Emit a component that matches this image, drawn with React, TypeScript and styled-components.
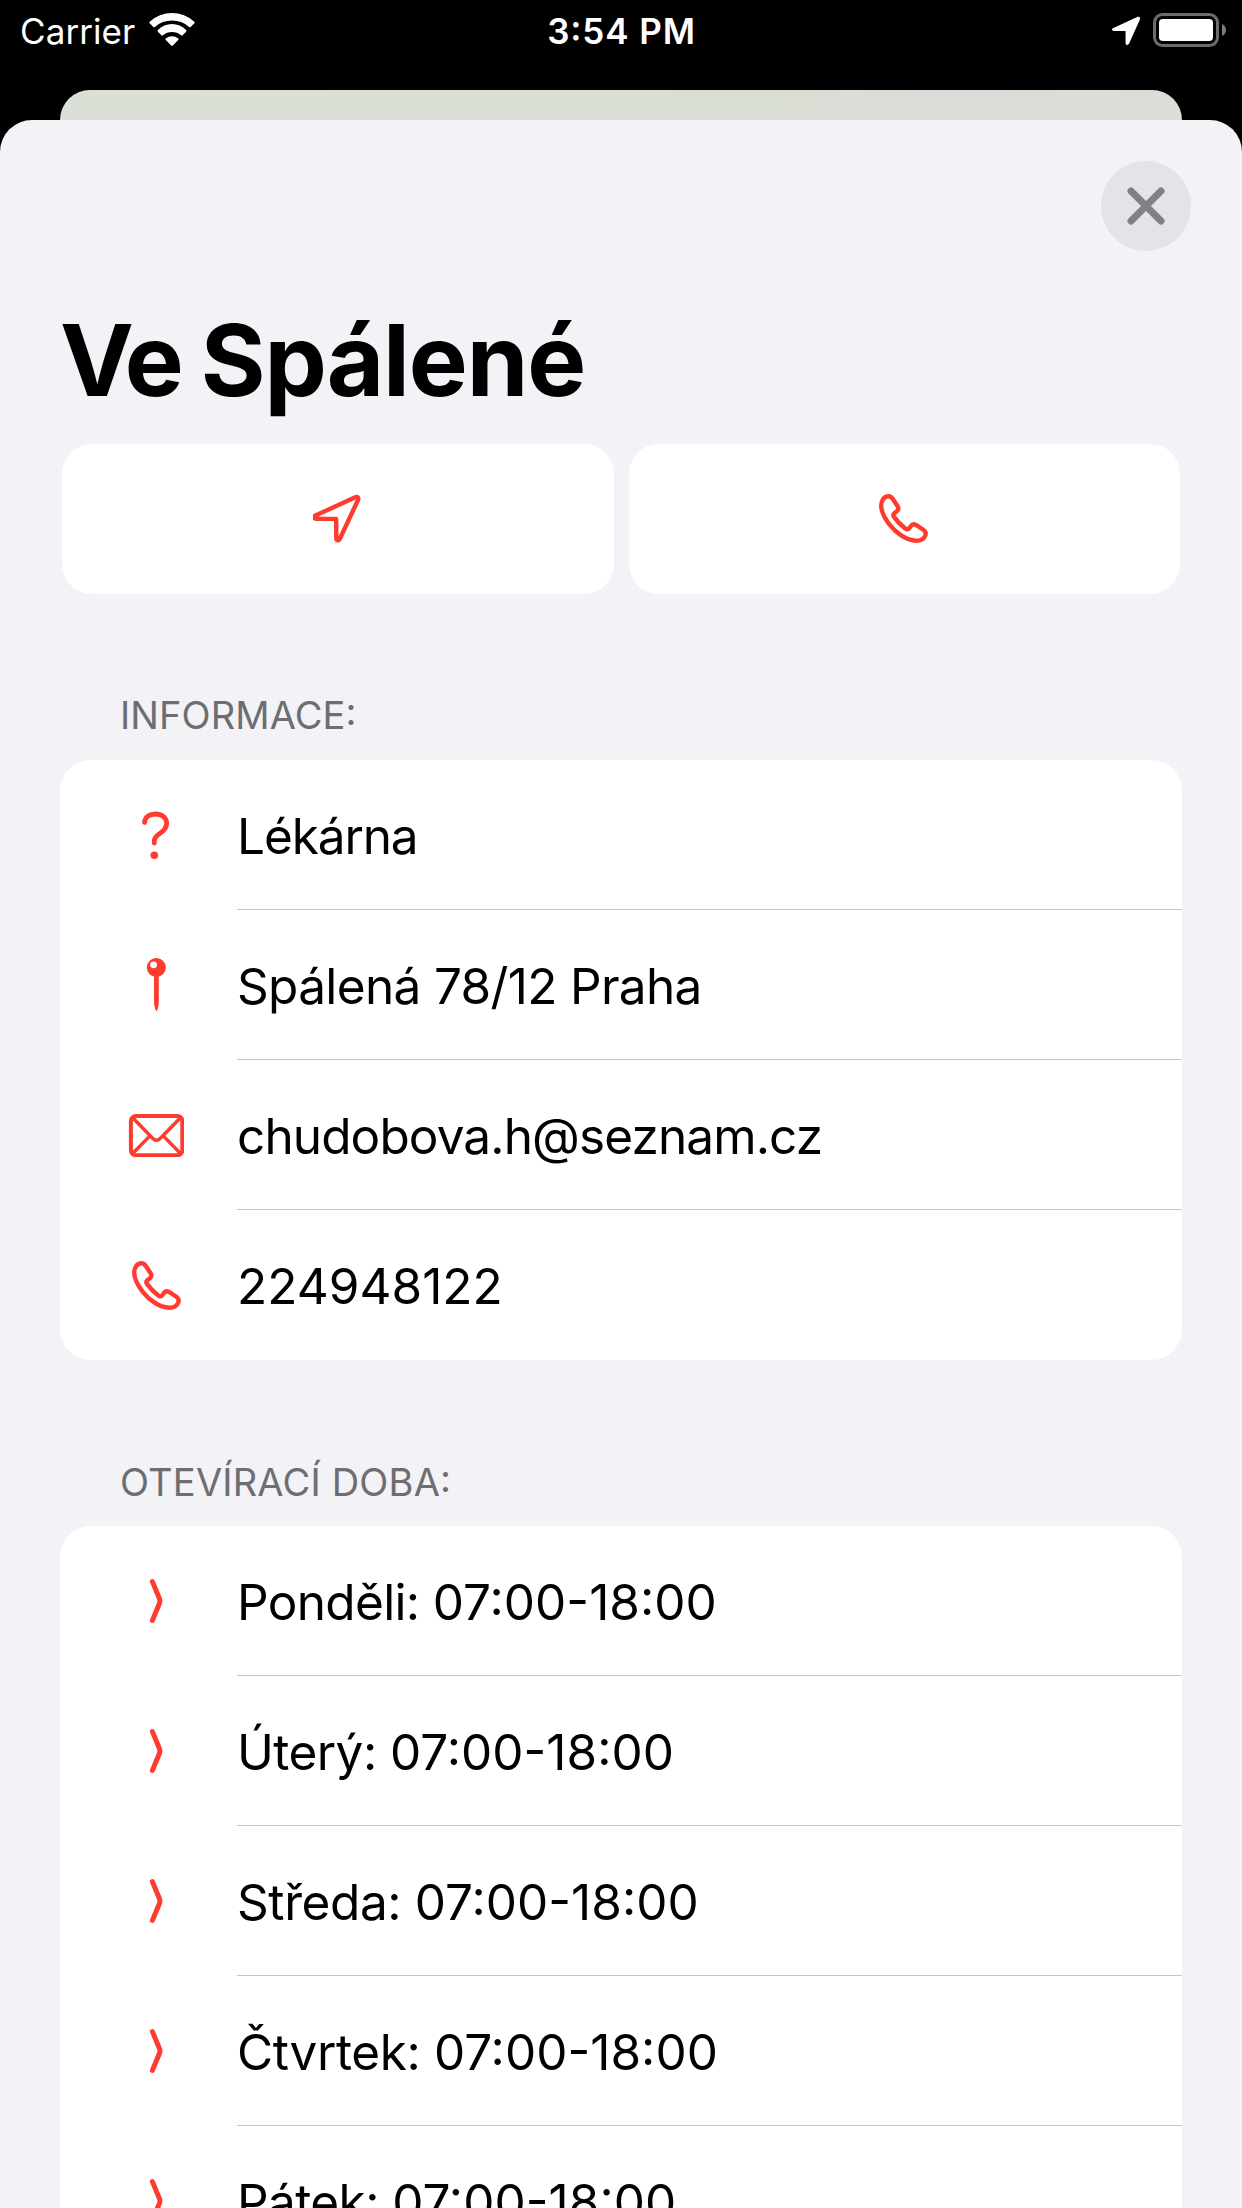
import React from 'react';
import styled, { createGlobalStyle } from 'styled-components';

const RED = '#ff3b30';

const GlobalStyle = createGlobalStyle`
  body {
    margin: 0;
    background: #000;
  }
  * {
    box-sizing: border-box;
  }
`;

const Screen = styled.div`
  display: flex;
  flex-direction: column;
  width: 1242px;
  height: 2208px;
  overflow: hidden;
  background: #000;
  color: #000;
  font-family: Inter, 'Liberation Sans', sans-serif;
  font-feature-settings: 'calt' 1, 'kern' 1;
`;

const StatusBar = styled.header`
  display: grid;
  grid-template-columns: 1fr auto 1fr;
  align-items: center;
  flex: none;
  height: 60px;
  padding: 0 16px 0 20px;
  color: #fff;
  font-size: 35px;
  line-height: 42px;
`;

const StatusGroup = styled.div<{ $end?: boolean; $gap: number }>`
  display: flex;
  align-items: center;
  justify-content: ${(p) => (p.$end ? 'flex-end' : 'flex-start')};
  gap: ${(p) => p.$gap}px;
`;

const StatusText = styled.span<{ $strong?: boolean }>`
  padding-top: 2px;
  padding-right: ${(p) => (p.$strong ? 3 : 0)}px;
  font-weight: ${(p) => (p.$strong ? 560 : 400)};
  letter-spacing: ${(p) => (p.$strong ? '0.9px' : '0.08px')};
`;

const BackCard = styled.div`
  flex: none;
  height: 30px;
  margin: 30px 60px 0;
  border-radius: 30px 30px 0 0;
  background: linear-gradient(90deg, #dbe0d7 0%, #d9dfd4 60%, #dddcd8 78%, #dddcd8 82%, #dbded6 95%);
`;

const Sheet = styled.main`
  flex: 1;
  min-height: 0;
  padding: 0 60px;
  border-radius: 32px 32px 0 0;
  background: #f2f2f7;
`;

const SheetTop = styled.div`
  display: flex;
  justify-content: flex-end;
  height: 180px;
  padding-top: 41px;
  margin-right: -9px;
`;

const CloseButton = styled.button`
  display: flex;
  align-items: center;
  justify-content: center;
  width: 90px;
  height: 90px;
  padding: 0;
  border: 0;
  border-radius: 50%;
  background: #e3e3e9;
`;

const Title = styled.h1`
  margin: 0 0 24px;
  font-size: 99px;
  font-weight: 700;
  line-height: 120px;
  white-space: pre;
`;

const Actions = styled.div`
  display: grid;
  grid-template-columns: 1fr 1fr;
  gap: 15px;
  padding: 0 2px;
`;

const ActionButton = styled.button`
  display: flex;
  align-items: center;
  justify-content: center;
  height: 150px;
  padding: 0;
  border: 0;
  border-radius: 30px;
  background: #fff;
`;

const SectionTitle = styled.h2<{ $tracking: number; $gap: number }>`
  display: flex;
  align-items: flex-end;
  height: 166px;
  margin: 0;
  padding: 0 60px ${(p) => p.$gap}px;
  color: #6d6d72;
  font-size: 38px;
  font-weight: 400;
  line-height: 46px;
  letter-spacing: ${(p) => p.$tracking}px;
`;

const List = styled.ul`
  margin: 0;
  padding: 0;
  border-radius: 31px;
  background: #fff;
  list-style: none;
`;

const Row = styled.li`
  display: flex;
  height: 150px;
`;

const IconCell = styled.div`
  display: flex;
  align-items: center;
  justify-content: center;
  flex: none;
  width: 72px;
  margin: 0 45px 0 60px;
`;

const Label = styled.div`
  display: flex;
  align-items: center;
  flex: 1;
  padding-top: 3px;
  border-bottom: 1px solid #c6c6c8;
  font-size: 49.5px;
  line-height: 60px;
  white-space: pre;

  ${Row}:last-child & {
    border-bottom-color: transparent;
  }
`;

const Part = styled.span<{ $tracking: number }>`
  letter-spacing: ${(p) => p.$tracking}px;
`;

const WifiIcon = () => (
  <svg width="46" height="34" viewBox="0 0 46 34" fill="#fff">
    <path d="M.7 8.7A33 33 0 0 1 45.3 8.7Q46 9.5 45.3 10.3L41.7 14Q40.9 14.7 40.1 14A25.4 25.4 0 0 0 5.9 14Q5.1 14.7 4.3 14L.7 10.3Q0 9.5.7 8.7Z" />
    <path d="M8.9 17.1A19.2 19.2 0 0 1 37.1 17.1Q37.8 17.9 37.1 18.7L33.6 22.2Q32.8 22.9 32 22.2A14 14 0 0 0 14 22.2Q13.2 22.9 12.4 22.2L8.9 18.7Q8.2 17.9 8.9 17.1Z" />
    <path d="M16.8 25.4A9.6 9.6 0 0 1 29.2 25.4Q30 26.2 29.2 27L23.8 32.6Q23 33.4 22.2 32.6L16.8 27Q16 26.2 16.8 25.4Z" />
  </svg>
);

const LocationFillIcon = () => (
  <svg width="28" height="30" viewBox="0 0 28 30" fill="#fff">
    <path d="M1.4 12.9L25.2 2.1C27.2 1.3 28.6 2.7 27.8 4.7L17.1 28.5C16 30.7 13.6 30.1 13.6 27.9L13.5 16.1L2 16C-.3 16-.7 13.8 1.4 12.9Z" />
  </svg>
);

const BatteryIcon = () => (
  <svg width="73" height="34" viewBox="0 0 73 34">
    <rect x="1.5" y="1.5" width="63" height="31" rx="8" fill="none" stroke="#6c6c6c" strokeWidth="3" />
    <rect x="6" y="6" width="54" height="22" rx="4" fill="#fff" />
    <path d="M69 11C71.4 12 73 14.2 73 17S71.4 22 69 23Z" fill="#7c7c7c" />
  </svg>
);

const CloseIcon = () => (
  <svg width="38" height="38" viewBox="0 0 38 38" fill="none" stroke="#808085" strokeWidth="7" strokeLinecap="round">
    <path d="M4 4L34 34M34 4L4 34" />
  </svg>
);

const LocationIcon = () => (
  <svg width="50" height="50" viewBox="0 0 50 50" fill="none" stroke={RED} strokeWidth="4.4" strokeLinejoin="round">
    <path d="M2.4 21.6L42.3 3.3C44.5 2.4 45.9 3.8 45.1 5.8L26.8 45C25.8 47 23.4 46.5 23.3 44.6L23.2 24.9L2.9 24.7C.4 24.6.1 22.6 2.4 21.6Z" />
  </svg>
);

const PhoneGlyph = styled.svg.attrs({ width: 50, height: 50, viewBox: '0 0 50 50' })`
  fill: none;
  stroke: ${RED};
  stroke-width: 4.4px;
  stroke-linejoin: round;

  ${IconCell} & {
    margin: 2px 0 0 2px;
  }
`;

const PhoneIcon = () => (
  <PhoneGlyph>
    <path d="M9.4 2.3C11.5 2.3 12.8 3.3 13.8 5L18.6 12.2C19.8 14.2 19.6 15.6 18.2 16.9L15.4 19.2C14 20.5 14 21.5 15 22.9C18 27.2 22 31.2 26.3 34.5C27.8 35.7 28.8 35.8 30.3 34.2L32.3 31.5C33.6 30.1 35 29.9 37 30.9L44 35.5C47 37.5 47.2 39.7 46 42.2C44.3 45.3 41.5 46.7 37.5 46.7C27 46.7 17 38.6 11 31.1C5 23.6 2.2 16.6 2.2 11.6C2.2 6.6 5 2.3 9.4 2.3Z" />
  </PhoneGlyph>
);

const QuestionIcon = () => (
  <svg width="30" height="50" viewBox="0 0 30 50" fill="none" stroke={RED} strokeWidth="4.8" strokeLinecap="round">
    <path d="M3.5 12.4C4 7.2 8.3 4 14.5 4C21 4 25.6 7.8 25.6 13.2C25.6 18 23 20.7 18.8 23.4C14.8 26 13.3 28 13.3 31V33" />
    <circle cx="13.3" cy="45.3" r="3.8" fill={RED} stroke="none" />
  </svg>
);

const PinIcon = () => (
  <svg width="20" height="54" viewBox="0 0 20 54" fill={RED}>
    <path fillRule="evenodd" d="M10.3 0A9.5 9.5 0 1 1 10.3 19A9.5 9.5 0 1 1 10.3 0ZM7.6 3.4A3.4 3.4 0 1 0 7.6 10.2A3.4 3.4 0 1 0 7.6 3.4Z" />
    <path d="M8 18H12.8V43C12.8 47.5 11.8 51 11 52.4Q10.4 53.4 9.8 52.4C9 51 8 47.5 8 43Z" />
  </svg>
);

const MailIcon = () => (
  <svg width="56" height="44" viewBox="0 0 56 44" fill="none" stroke={RED} strokeWidth="4" strokeLinejoin="round">
    <rect x="2.9" y="2.9" width="51.4" height="39.4" rx="5" />
    <path d="M4.2 4.2L24.6 25.2Q28.5 29.2 32.4 25.2L53 4.2M4.2 41L21.2 23.6M53 41L36 23.6" strokeWidth="3.5" />
  </svg>
);

const ChevronIcon = () => (
  <svg width="16" height="46" viewBox="0 0 16 46" fill="none" stroke={RED} strokeWidth="5" strokeLinecap="round" strokeLinejoin="round">
    <path d="M4.4 3.6L11.5 20.8Q12.4 23 11.5 25.2L4.4 42.4" />
  </svg>
);

const details = [
  { Icon: QuestionIcon, text: 'Lékárna', tracking: -1.1 },
  { Icon: PinIcon, text: 'Spálená 78/12 Praha', tracking: -0.66 },
  { Icon: MailIcon, text: 'chudobova.h@seznam.cz', tracking: -0.88 },
  { Icon: PhoneIcon, text: '224948122', tracking: 0.05 },
];

const hours = [
  { day: 'Ponděli', tracking: -0.65 },
  { day: 'Úterý', tracking: -0.55 },
  { day: 'Středa', tracking: -0.4 },
  { day: 'Čtvrtek', tracking: -0.4 },
  { day: 'Pátek', tracking: -0.6 },
];

export default function App() {
  return (
    <Screen>
      <GlobalStyle />
      <StatusBar>
        <StatusGroup $gap={14}>
          <StatusText>Carrier</StatusText>
          <WifiIcon />
        </StatusGroup>
        <StatusText $strong>3:54 PM</StatusText>
        <StatusGroup $end $gap={13}>
          <LocationFillIcon />
          <BatteryIcon />
        </StatusGroup>
      </StatusBar>
      <BackCard />
      <Sheet>
        <SheetTop>
          <CloseButton aria-label="Zavřít">
            <CloseIcon />
          </CloseButton>
        </SheetTop>
        <Title>
          <Part $tracking={-3.2}>{'Ve '}</Part>
          <Part $tracking={-1.1}>Spálené</Part>
        </Title>
        <Actions>
          <ActionButton aria-label="Navigovat">
            <LocationIcon />
          </ActionButton>
          <ActionButton aria-label="Zavolat">
            <PhoneIcon />
          </ActionButton>
        </Actions>
        <SectionTitle $tracking={0.1} $gap={22}>INFORMACE:</SectionTitle>
        <List>
          {details.map(({ Icon, text, tracking }) => (
            <Row key={text}>
              <IconCell>
                <Icon />
              </IconCell>
              <Label>
                <Part $tracking={tracking}>{text}</Part>
              </Label>
            </Row>
          ))}
        </List>
        <SectionTitle $tracking={0.2} $gap={21}>OTEVÍRACÍ DOBA:</SectionTitle>
        <List>
          {hours.map(({ day, tracking }) => (
            <Row key={day}>
              <IconCell>
                <ChevronIcon />
              </IconCell>
              <Label>
                <Part $tracking={tracking}>{`${day}: `}</Part>
                <Part $tracking={0.05}>07:00-18:00</Part>
              </Label>
            </Row>
          ))}
        </List>
      </Sheet>
    </Screen>
  );
}
